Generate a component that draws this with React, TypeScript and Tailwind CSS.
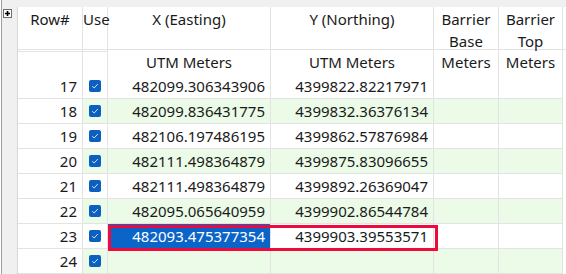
const rows = [
  { n: 17, x: '482099.306343906', y: '4399822.82217971' },
  { n: 18, x: '482099.836431775', y: '4399832.36376134' },
  { n: 19, x: '482106.197486195', y: '4399862.57876984' },
  { n: 20, x: '482111.498364879', y: '4399875.83096655' },
  { n: 21, x: '482111.498364879', y: '4399892.26369047' },
  { n: 22, x: '482095.065640959', y: '4399902.86544784' },
  { n: 23, x: '482093.475377354', y: '4399903.39553571' },
  { n: 24, x: '', y: '' },
];

const Check = () => (
  <div className="w-[12px] h-[12px] rounded-[2px] bg-[#0a5fc0] flex items-center justify-center">
    <svg width="8" height="8" viewBox="0 0 8 8">
      <path d="M1.2 4.2 L3.2 6 L6.8 2" fill="none" stroke="#cfe0f5" strokeWidth="1" />
    </svg>
  </div>
);

const cols = 'grid grid-cols-[65px_25px_163px_163px_65px_64px]';

export default function App() {
  return (
    <div
      className="w-[566px] h-[274px] overflow-hidden bg-white text-[15px] text-[#1a1a1a] flex"
      style={{ fontFamily: "'Noto Sans', 'Open Sans', sans-serif" }}
    >
      {/* left gutter */}
      <div className="w-[16px] shrink-0 bg-[#f0f0f0] border-l border-[#a0a0a0] ml-[1px] relative">
        <div className="absolute left-[1px] top-[9px] w-[9px] h-[9px] border border-[#6d6d6d] bg-white flex items-center justify-center">
          <svg width="7" height="7" viewBox="0 0 7 7">
            <path d="M3.5 1 V6 M1 3.5 H6" stroke="#000" strokeWidth="1.6" />
          </svg>
        </div>
      </div>

      <div className="flex-1 flex flex-col">
        <div className="h-[7px] bg-[#f0f0f0]" />
        <div className="relative border-l border-[#d8d8d8] flex-1">
          {/* header row 1 */}
          <div className={`${cols} h-[43px] leading-[22px] text-center`}>
            <div className="border-r border-b border-[#e3e3e3] pt-[1px]">Row#</div>
            <div className="border-r border-b border-[#e3e3e3] pt-[1px] whitespace-nowrap">Use</div>
            <div className="border-r border-[#e3e3e3] pt-[1px]">X (Easting)</div>
            <div className="border-r border-[#e3e3e3] pt-[1px]">Y (Northing)</div>
            <div className="border-r border-[#e3e3e3] pt-[1px]">Barrier<br />Base</div>
            <div className="border-r border-[#e3e3e3] pt-[1px]">Barrier<br />Top</div>
          </div>
          {/* header row 2 */}
          <div className={`${cols} h-[25px] leading-[24px] text-center border-t border-[#e3e3e3] -mt-[1px]`}>
            <div className="border-r border-b border-[#e3e3e3]" />
            <div className="border-r border-b border-[#e3e3e3]" />
            <div className="border-r border-b border-[#e3e3e3]">UTM Meters</div>
            <div className="border-r border-b border-[#e3e3e3]">UTM Meters</div>
            <div className="border-r border-b border-[#e3e3e3]">Meters</div>
            <div className="border-r border-b border-[#e3e3e3]">Meters</div>
          </div>
          {rows.map((r) => {
            const green = r.n % 2 === 0;
            const bg = green ? 'bg-[#ebfbe8]' : 'bg-white';
            const sel = r.n === 23;
            return (
              <div key={r.n} className={`${cols} h-[25px] leading-[24px]`}>
                <div className="border-r border-b border-[#e3e3e3] text-right pr-[5px] bg-white">{r.n}</div>
                <div className={`border-r border-b border-[#e3e3e3] ${bg} flex items-center justify-center`}>
                  <Check />
                </div>
                <div
                  className={`border-r border-b border-[#e3e3e3] text-right pr-[5px] ${
                    sel ? 'bg-[#0b64c8] text-white' : bg
                  }`}
                >
                  {r.x}
                </div>
                <div className={`border-r border-b border-[#e3e3e3] text-right pr-[5px] ${bg}`}>{r.y}</div>
                <div className={`border-r border-b border-[#e3e3e3] ${bg}`} />
                <div className={`border-r border-b border-[#e3e3e3] ${bg}`} />
              </div>
            );
          })}
          {/* selection outline */}
          <div className="absolute left-[90px] top-[218px] w-[330px] h-[26px] border-[3px] border-[#ee0a3c] pointer-events-none" />
        </div>
      </div>
    </div>
  );
}
